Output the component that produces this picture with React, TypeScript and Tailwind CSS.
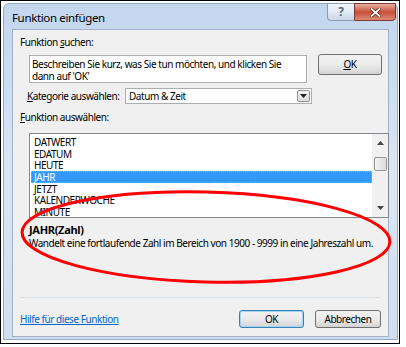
import React from "react";

const items = ["DATWERT", "EDATUM", "HEUTE", "JAHR", "JETZT", "KALENDERWOCHE", "MINUTE"];

const Btn = ({ children, focused = false, className = "" }: { children: React.ReactNode; focused?: boolean; className?: string }) => (
  <div
    className={`flex items-center justify-center rounded-[3px] border ${
      focused ? "border-[#3c7fb1] shadow-[inset_0_0_0_1px_#9fd5f5]" : "border-[#707070]"
    } bg-gradient-to-b from-[#f2f2f2] via-[#ebebeb] to-[#d4d4d4] text-black ${className}`}
  >
    {children}
  </div>
);

export default function App() {
  return (
    <div
      className="relative w-[406px] h-[347px] bg-white text-[10px] tracking-[-0.45px] text-black"
      style={{ fontFamily: '"Noto Sans", "Open Sans", sans-serif' }}
    >
      <div className="w-[400px] h-[344px] border border-black pl-[2px] pt-[2px] pr-[1px] pb-[3px]">
        <div className="flex h-full flex-col rounded-t-[6px] border border-[#8fa9c6] bg-gradient-to-b from-[#c2d6ee] via-[#d9e6f5] to-[#cfdff0] px-[8px] pb-[2px]">
          {/* title bar */}
          <div className="flex h-[25px] items-start">
            <div className="pt-[7px] text-[11.5px] leading-[13px] tracking-[-0.35px]">Funktion einfügen</div>
            <div className="ml-auto flex -mr-[7px] -mt-[1px]">
              <div className="flex h-[18px] w-[27px] items-center justify-center rounded-bl-[4px] border border-[#8c9db5] border-r-0 bg-gradient-to-b from-[#f1f5fa] via-[#e2eaf4] to-[#c9d7e9] text-[12px] font-bold text-[#5a6a80]">
                ?
              </div>
              <div className="flex h-[18px] w-[42px] items-center justify-center rounded-br-[4px] border border-[#7a3a2e] bg-gradient-to-b from-[#e8b0a0] via-[#c84e3a] to-[#dc8a72]">
                <svg width="11" height="9" viewBox="0 0 11 9">
                  <path d="M1.5 1 L9.5 8 M9.5 1 L1.5 8" stroke="#4a2018" strokeWidth="3.2" strokeLinecap="square" />
                  <path d="M1.5 1 L9.5 8 M9.5 1 L1.5 8" stroke="#ffffff" strokeWidth="1.8" strokeLinecap="square" />
                </svg>
              </div>
            </div>
          </div>

          {/* client area */}
          <div className="flex flex-1 flex-col border border-[#9fb2c8] bg-[#f0f0f0] pl-[7px] pr-[6px] pb-[8px]">
            <div className="mt-[6px] leading-[13px]">
              Funktion <span className="underline">s</span>uchen:
            </div>
            <div className="mt-[5px] flex items-start">
              <div className="ml-[9px] mt-[1px] h-[28px] w-[283px] border border-[#abadb3] bg-white px-[2px] pt-[2px] leading-[12px]">
                Beschreiben Sie kurz, was Sie tun möchten, und klicken Sie
                <br />
                dann auf 'OK'
              </div>
              <Btn className="ml-[11px] h-[21px] w-[65px]">
                <span className="underline">O</span>K
              </Btn>
            </div>
            <div className="mt-[5px] flex h-[16px] items-center">
              <div className="ml-[7px] w-[98px] whitespace-nowrap leading-[13px]">
                <span className="underline">K</span>ategorie auswählen:
              </div>
              <div className="flex h-[16px] w-[187px] items-center border border-[#abadb3] bg-white pl-[3px]">
                <span className="leading-[12px]">Datum &amp; Zeit</span>
                <div className="ml-auto mr-[1px] flex h-[12px] w-[13px] items-center justify-center rounded-[2px] border border-[#8e8f8f] bg-gradient-to-b from-[#f4f4f4] to-[#dcdcdc]">
                  <svg width="7" height="4" viewBox="0 0 7 4">
                    <path d="M0 0 H7 L3.5 4 Z" fill="#222" />
                  </svg>
                </div>
              </div>
            </div>
            <div className="mt-[7px] leading-[13px]">
              <span className="underline">F</span>unktion auswählen:
            </div>
            <div className="ml-[9px] mt-[9px] flex h-[85px] w-[360px] overflow-hidden border border-[#828790] bg-white">
              <div className="flex-1 pt-[2.5px] pl-[1px]">
                {items.map((it) => (
                  <div
                    key={it}
                    className={`flex h-[11.6px] items-center pl-[3px] leading-[10px] ${
                      it === "JAHR" ? "bg-[#3399ff] text-white outline outline-1 outline-dotted -outline-offset-1 outline-[#e0a050]" : ""
                    }`}
                  >
                    {it}
                  </div>
                ))}
              </div>
              <div className="flex w-[16px] flex-col items-center bg-[#f0f0f0] py-[7px]">
                <svg width="7" height="4" viewBox="0 0 7 4">
                  <path d="M0 4 H7 L3.5 0 Z" fill="#444" />
                </svg>
                <div className="mt-[12px] h-[14px] w-[13px] rounded-[2px] border border-[#979797] bg-gradient-to-r from-[#f3f3f3] to-[#dcdcdc]" />
                <div className="flex-1" />
                <svg width="7" height="4" viewBox="0 0 7 4">
                  <path d="M0 0 H7 L3.5 4 Z" fill="#444" />
                </svg>
              </div>
            </div>
            <div className="ml-[9px] mt-[5px] text-[11px] font-bold leading-[13px] tracking-[-0.3px]">JAHR(Zahl)</div>
            <div className="ml-[9px] mt-[1px] whitespace-nowrap leading-[13px]">
              Wandelt eine fortlaufende Zahl im Bereich von 1900 - 9999 in eine Jahreszahl um.
            </div>
            <div className="flex-1" />
            <div className="mr-[2px] h-px bg-[#d5dfe5]" />
            <div className="mt-[12px] flex items-center">
              <span className="leading-[13px] text-[#0066cc] underline">Hilfe für diese Funktion</span>
              <Btn focused className="ml-auto h-[18px] w-[65px]">OK</Btn>
              <Btn className="ml-[11px] mr-[1px] h-[18px] w-[66px]">Abbrechen</Btn>
            </div>
          </div>
        </div>
      </div>

      {/* red annotation ellipse */}
      <svg className="pointer-events-none absolute left-0 top-0" width="406" height="347">
        <ellipse cx="206" cy="237" rx="184" ry="45" fill="none" stroke="#ff0000" strokeWidth="3" transform="rotate(1.5 206 237)" />
      </svg>
    </div>
  );
}
